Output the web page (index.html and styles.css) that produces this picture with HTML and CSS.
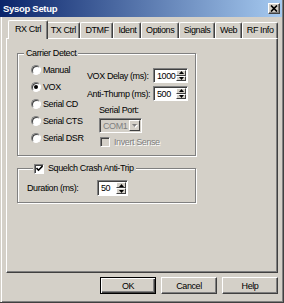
FILE: index.html
```html
<!DOCTYPE html>
<html lang="en">
<head>
    <meta charset="UTF-8">
    <title>Sysop Setup</title>
    <link rel="stylesheet" href="styles.css">
</head>
<body>
<div class="window">
    <div class="titlebar">
        <span class="title">Sysop Setup</span>
        <span class="close-btn">
            <svg width="8" height="7" viewBox="0 0 8 7"><path d="M1 0.5 L7 6.5 M7 0.5 L1 6.5" stroke="#000" stroke-width="1.7" fill="none"/></svg>
        </span>
    </div>
    <div class="client">
        <div class="tabs">
            <div class="tab active">RX Ctrl</div>
            <div class="tab">TX Ctrl</div>
            <div class="tab">DTMF</div>
            <div class="tab">Ident</div>
            <div class="tab">Options</div>
            <div class="tab">Signals</div>
            <div class="tab">Web</div>
            <div class="tab">RF Info</div>
        </div>
        <div class="panel">
            <fieldset class="group carrier">
                <legend>Carrier Detect</legend>
                <div class="carrier-body">
                    <div class="radio-list">
                        <div class="radio-row"><span class="radio"></span>Manual</div>
                        <div class="radio-row"><span class="radio checked"></span>VOX</div>
                        <div class="radio-row"><span class="radio"></span>Serial CD</div>
                        <div class="radio-row"><span class="radio"></span>Serial CTS</div>
                        <div class="radio-row"><span class="radio"></span>Serial DSR</div>
                    </div>
                    <div class="vox-col">
                        <div class="field-row">
                            <span class="field-label">VOX Delay (ms):</span>
                            <span class="spin">
                                <span class="spin-value">1000</span>
                                <span class="spin-btns">
                                    <span class="spin-btn"><svg width="5" height="3"><polygon points="2.5,0 5,3 0,3" fill="#000"/></svg></span>
                                    <span class="spin-btn"><svg width="5" height="3"><polygon points="0,0 5,0 2.5,3" fill="#000"/></svg></span>
                                </span>
                            </span>
                        </div>
                        <div class="field-row">
                            <span class="field-label">Anti-Thump (ms):</span>
                            <span class="spin">
                                <span class="spin-value">500</span>
                                <span class="spin-btns">
                                    <span class="spin-btn"><svg width="5" height="3"><polygon points="2.5,0 5,3 0,3" fill="#000"/></svg></span>
                                    <span class="spin-btn"><svg width="5" height="3"><polygon points="0,0 5,0 2.5,3" fill="#000"/></svg></span>
                                </span>
                            </span>
                        </div>
                        <div class="serial">
                            <div class="serial-label">Serial Port:</div>
                            <div class="combo">
                                <span class="combo-value">COM1</span>
                                <span class="combo-btn"><svg width="6" height="4"><polygon points="1,1 6,1 3.5,4" fill="#fff"/><polygon points="0,0 5,0 2.5,3" fill="#808080"/></svg></span>
                            </div>
                            <div class="check-row disabled"><span class="check"></span>Invert Sense</div>
                        </div>
                    </div>
                </div>
            </fieldset>
            <fieldset class="group squelch">
                <legend><span class="check">
                    <svg width="7" height="7" viewBox="0 0 7 7"><path d="M0.5 3 L2.5 5.2 L6.5 1" stroke="#000" stroke-width="1.6" fill="none"/></svg>
                </span>Squelch Crash Anti-Trip</legend>
                <div class="field-row">
                    <span class="field-label duration">Duration (ms):</span>
                    <span class="spin small">
                        <span class="spin-value">50</span>
                        <span class="spin-btns">
                            <span class="spin-btn"><svg width="5" height="3"><polygon points="2.5,0 5,3 0,3" fill="#000"/></svg></span>
                            <span class="spin-btn"><svg width="5" height="3"><polygon points="0,0 5,0 2.5,3" fill="#000"/></svg></span>
                        </span>
                    </span>
                </div>
            </fieldset>
        </div>
        <div class="buttons">
            <button class="btn default">OK</button>
            <button class="btn">Cancel</button>
            <button class="btn">Help</button>
        </div>
    </div>
</div>
</body>
</html>
```

FILE: styles.css
```css
body {
    margin: 0;
    background-color: #d4d0c8;
    font-family: "Liberation Sans", Arial, sans-serif;
    font-size: 9px;
    letter-spacing: -0.4px;
    color: #000;
}

.window {
    width: 284px;
    height: 303px;
    box-sizing: border-box;
    background-color: #d4d0c8;
    border-right: 1px solid #404040;
    border-bottom: 1px solid #404040;
    box-shadow: inset 1px 0 0 #d4d0c8, inset 2px 0 0 #fff, inset -1px -1px 0 #808080;
    display: flex;
    flex-direction: column;
}

/* title bar */
.titlebar {
    height: 17px;
    margin-right: 1px;
    padding: 0 2px 0 3px;
    display: flex;
    align-items: center;
    justify-content: space-between;
    background: linear-gradient(to right, #0a246a, #a6caf0);
}

.title {
    color: #fff;
    font-weight: bold;
    font-size: 9.5px;
    letter-spacing: -0.3px;
}

.close-btn {
    width: 12px;
    height: 11px;
    box-sizing: border-box;
    background-color: #d4d0c8;
    border: 1px solid;
    border-color: #fff #404040 #404040 #fff;
    box-shadow: inset -1px -1px 0 #808080;
    display: flex;
    align-items: center;
    justify-content: center;
}

.close-btn svg {
    display: block;
}

.client {
    flex: 1;
    display: flex;
    flex-direction: column;
    padding: 0 5px 0 6px;
}

/* tabs */
.tabs {
    display: flex;
    align-items: flex-end;
    height: 18px;
    margin-top: 3px;
    padding-left: 4px;
}

.tab {
    position: relative;
    height: 16px;
    line-height: 15px;
    min-width: 24px;
    padding: 0 4px;
    text-align: center;
    box-sizing: border-box;
    border-top: 1px solid #fff;
    border-left: 1px solid #fff;
    border-right: 1px solid #404040;
    border-radius: 2px 2px 0 0;
    box-shadow: inset -1px 0 0 #808080;
    white-space: nowrap;
}

.tab.active {
    height: 19px;
    line-height: 17px;
    margin: 0 -2px -1px -2px;
    padding: 0 6px;
    z-index: 1;
    background-color: #d4d0c8;
}

/* tab page */
.panel {
    height: 235px;
    box-sizing: border-box;
    border: 1px solid;
    border-color: #fff #404040 #404040 #fff;
    box-shadow: inset -1px -1px 0 #808080;
    padding-left: 10px;
}

.group {
    width: 179px;
    box-sizing: border-box;
    min-width: 0;
    margin: 0;
    padding: 0;
    border: 1px solid #808080;
    box-shadow: inset 1px 1px 0 #fff, 1px 1px 0 #fff;
}

.group legend {
    margin-left: 6px;
    padding: 0 2px;
    line-height: 12px;
    background-color: #d4d0c8;
}

.carrier {
    margin-top: 8px;
}

.carrier-body {
    height: 96px;
    display: flex;
    padding-left: 13px;
}

.radio-list {
    width: 56px;
    padding-top: 2px;
}

.radio-row {
    height: 17px;
    display: flex;
    align-items: center;
    white-space: nowrap;
}

.radio {
    width: 10px;
    height: 10px;
    box-sizing: border-box;
    margin-right: 2px;
    border-radius: 50%;
    background-color: #fff;
    border: 1px solid;
    border-color: #808080 #fff #fff #808080;
    box-shadow: inset 1px 1px 0 #404040;
    display: flex;
    align-items: center;
    justify-content: center;
}

.radio.checked::after {
    content: "";
    width: 4px;
    height: 4px;
    border-radius: 50%;
    background-color: #000;
}

.vox-col {
    padding-top: 9px;
}

.field-row {
    display: flex;
    align-items: center;
    height: 15px;
    margin-bottom: 3px;
    white-space: nowrap;
}

.field-label {
    width: 66px;
}

.field-label.duration {
    width: 70px;
}

.spin {
    width: 35px;
    height: 15px;
    box-sizing: border-box;
    display: flex;
    background-color: #fff;
    border: 1px solid;
    border-color: #808080 #fff #fff #808080;
    box-shadow: inset 1px 1px 0 #404040;
    padding: 1px;
}

.spin.small {
    width: 31px;
    height: 16px;
}

.spin-value {
    flex: 1;
    padding-left: 2px;
    line-height: 12px;
}

.spin-btns {
    width: 10px;
    display: flex;
    flex-direction: column;
}

.spin-btn {
    flex: 1;
    box-sizing: border-box;
    background-color: #d4d0c8;
    border: 1px solid;
    border-color: #fff #404040 #404040 #fff;
    display: flex;
    align-items: center;
    justify-content: center;
}

.spin-btn svg {
    display: block;
}

.serial {
    margin-top: 3px;
    padding-left: 12px;
}

.serial-label {
    line-height: 12px;
}

.combo {
    width: 43px;
    height: 15px;
    margin-top: 2px;
    box-sizing: border-box;
    display: flex;
    padding: 1px;
    border: 1px solid;
    border-color: #808080 #fff #fff #808080;
    box-shadow: inset 1px 1px 0 #404040;
}

.combo-value {
    flex: 1;
    padding-left: 2px;
    line-height: 12px;
    color: #808080;
}

.combo-btn {
    width: 11px;
    box-sizing: border-box;
    border: 1px solid;
    border-color: #fff #404040 #404040 #fff;
    display: flex;
    align-items: center;
    justify-content: center;
}

.check-row {
    display: flex;
    align-items: center;
    height: 10px;
    margin-top: 4px;
    padding-left: 1px;
    white-space: nowrap;
}

.check-row.disabled {
    color: #808080;
    text-shadow: 1px 1px 0 #fff;
}

.check {
    width: 10px;
    height: 10px;
    box-sizing: border-box;
    margin-right: 4px;
    background-color: #fff;
    border: 1px solid;
    border-color: #808080 #fff #fff #808080;
    box-shadow: inset 1px 1px 0 #404040;
    display: inline-flex;
    align-items: center;
    justify-content: center;
    vertical-align: -1px;
}

.check-row.disabled .check {
    background-color: #d4d0c8;
}

.check svg {
    display: block;
}

.squelch {
    margin-top: 6px;
    padding: 6px 0 6px 9px;
}

.squelch legend {
    padding: 0 2px 0 1px;
}

.squelch .field-row {
    height: 16px;
    margin-bottom: 0;
}

/* dialog buttons */
.buttons {
    display: flex;
    justify-content: flex-end;
    gap: 5px;
    margin-top: 4px;
}

.btn {
    width: 56px;
    height: 17px;
    padding: 0;
    box-sizing: border-box;
    font-family: inherit;
    font-size: inherit;
    letter-spacing: inherit;
    color: #000;
    background-color: #d4d0c8;
    border: 1px solid;
    border-color: #fff #404040 #404040 #fff;
    box-shadow: inset -1px -1px 0 #808080;
}

.btn.default {
    border-color: #000;
    box-shadow: inset 1px 1px 0 #fff, inset -1px -1px 0 #404040, inset -2px -2px 0 #808080;
}
```
